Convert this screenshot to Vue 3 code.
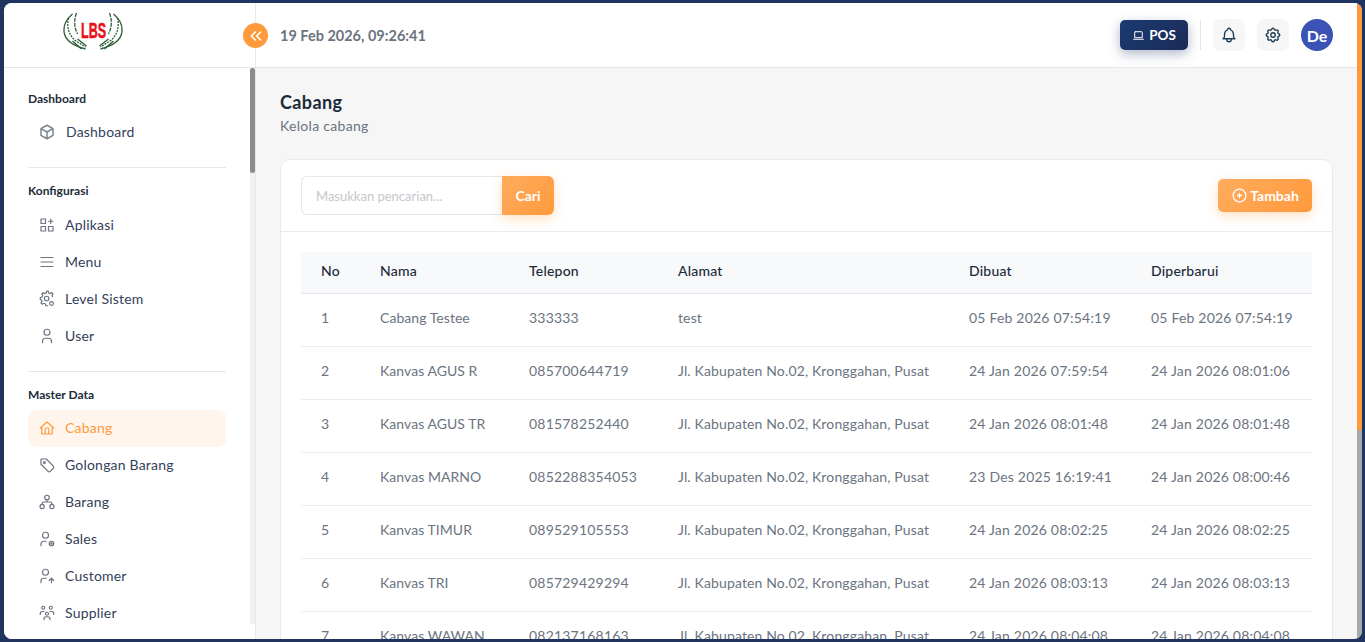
<script setup>
const konfigurasi = [
  { label: 'Aplikasi', icon: 'apps' },
  { label: 'Menu', icon: 'menu' },
  { label: 'Level Sistem', icon: 'cog' },
  { label: 'User', icon: 'user' },
]
const masterData = [
  { label: 'Cabang', icon: 'home', active: true },
  { label: 'Golongan Barang', icon: 'tag' },
  { label: 'Barang', icon: 'tree' },
  { label: 'Sales', icon: 'sales' },
  { label: 'Customer', icon: 'customer' },
  { label: 'Supplier', icon: 'group' },
]
const alamat = 'Jl. Kabupaten No.02, Kronggahan, Pusat'
const cabang = [
  { no: 1, nama: 'Cabang Testee', telp: '333333', alamat: 'test', dibuat: '05 Feb 2026 07:54:19', update: '05 Feb 2026 07:54:19' },
  { no: 2, nama: 'Kanvas AGUS R', telp: '085700644719', alamat, dibuat: '24 Jan 2026 07:59:54', update: '24 Jan 2026 08:01:06' },
  { no: 3, nama: 'Kanvas AGUS TR', telp: '081578252440', alamat, dibuat: '24 Jan 2026 08:01:48', update: '24 Jan 2026 08:01:48' },
  { no: 4, nama: 'Kanvas MARNO', telp: '0852288354053', alamat, dibuat: '23 Des 2025 16:19:41', update: '24 Jan 2026 08:00:46' },
  { no: 5, nama: 'Kanvas TIMUR', telp: '089529105553', alamat, dibuat: '24 Jan 2026 08:02:25', update: '24 Jan 2026 08:02:25' },
  { no: 6, nama: 'Kanvas TRI', telp: '085729429294', alamat, dibuat: '24 Jan 2026 08:03:13', update: '24 Jan 2026 08:03:13' },
  { no: 7, nama: 'Kanvas WAWAN', telp: '082137168163', alamat, dibuat: '24 Jan 2026 08:04:08', update: '24 Jan 2026 08:04:08' },
]
</script>

<template>
  <div class="frame">
    <div class="window">
      <aside class="sidebar">
        <div class="logo">
          <svg width="62" height="42" viewBox="0 0 61 42">
            <g class="hand">
              <path d="M10 4C4 9 0 16 2 24c2 8 10 12 21 15" />
              <path d="M14 3c-3 8-2 15 1 21" stroke-dasharray="4 1" />
              <path d="M6 8c-2 8 0 16 6 22l11 7" stroke-dasharray="2 1" />
              <path d="M10 31l9 8M15 29l9 7" stroke-width="1" />
            </g>
            <g class="hand" transform="matrix(-1 0 0 1 61 0)">
              <path d="M10 4C4 9 0 16 2 24c2 8 10 12 21 15" />
              <path d="M14 3c-3 8-2 15 1 21" stroke-dasharray="4 1" />
              <path d="M6 8c-2 8 0 16 6 22l11 7" stroke-dasharray="2 1" />
              <path d="M10 31l9 8M15 29l9 7" stroke-width="1" />
            </g>
            <text x="18.500" y="28" textLength="25" lengthAdjust="spacingAndGlyphs" class="logo-text">LBS</text>
          </svg>
        </div>
        <div class="nav-wrap">
          <nav class="nav">
            <div class="nav-group">
              <p class="nav-title">Dashboard</p>
              <a class="nav-item first">
                <svg class="ic" viewBox="0 0 24 24"><path d="M12 3l8 4.500v9L12 21l-8-4.500v-9L12 3zM12 12l8-4.500M12 12v9M12 12L4 7.500" /></svg>
                <span>Dashboard</span>
              </a>
            </div>
            <div class="nav-group">
              <p class="nav-title">Konfigurasi</p>
              <a v-for="item in konfigurasi" :key="item.label" class="nav-item">
                <svg class="ic" viewBox="0 0 24 24">
                  <path v-if="item.icon === 'apps'" d="M4 4h6v6H4zM4 14h6v6H4zM14 14h6v6h-6zM14 7h6M17 4v6" />
                  <path v-else-if="item.icon === 'menu'" d="M4 6h16M4 12h16M4 18h16" />
                  <template v-else-if="item.icon === 'cog'">
                    <path d="M13 21h-2.500l-.6-2.400-2-.9-2.200 1.300-1.700-1.700 1.300-2.200-.9-2L3 12.500V10l2.400-.6.9-2L5 5.200l1.700-1.700 2.200 1.300 2-.9.6-2.400h2l.6 2.400 2 .9 2.200-1.300 1.700 1.700-1.300 2.200.7 1.600" />
                    <circle cx="11.500" cy="11.300" r="3" />
                    <circle cx="18" cy="18" r="2.500" />
                  </template>
                  <path v-else d="M12 3a4 4 0 1 0 0 8 4 4 0 0 0 0-8zM6 21v-2a4 4 0 0 1 4-4h4a4 4 0 0 1 4 4v2" />
                </svg>
                <span>{{ item.label }}</span>
              </a>
            </div>
            <div class="nav-group last">
              <p class="nav-title">Master Data</p>
              <a v-for="item in masterData" :key="item.label" class="nav-item" :class="{ active: item.active }">
                <svg class="ic" viewBox="0 0 24 24">
                  <path v-if="item.icon === 'home'" d="M3 12l9-8 9 8M5 10v10h14V10M9.500 20v-6a2 2 0 0 1 2-2h1a2 2 0 0 1 2 2v6" />
                  <template v-else-if="item.icon === 'tag'">
                    <path d="M4 4h7l9.500 9.500a2 2 0 0 1 0 2.800l-4.200 4.200a2 2 0 0 1-2.800 0L4 11V4z" />
                    <circle cx="8.500" cy="8.500" r="1.200" />
                  </template>
                  <template v-else-if="item.icon === 'tree'">
                    <circle cx="12" cy="6" r="3" /><circle cx="5.500" cy="18" r="2.800" /><circle cx="18.500" cy="18" r="2.800" />
                    <path d="M12 9v3M5.500 15v-1a2 2 0 0 1 2-2h9a2 2 0 0 1 2 2v1" />
                  </template>
                  <template v-else-if="item.icon === 'sales'">
                    <circle cx="10" cy="7" r="4" /><path d="M4 21v-2a4 4 0 0 1 4-4h3" /><circle cx="18" cy="18" r="3" /><circle cx="18" cy="18" r=".8" />
                  </template>
                  <template v-else-if="item.icon === 'customer'">
                    <circle cx="10" cy="7" r="4" /><path d="M4 21v-2a4 4 0 0 1 4-4h3M18 21v-6M15 18l3-3 3 3" />
                  </template>
                  <template v-else>
                    <circle cx="7" cy="5" r="2" /><circle cx="17" cy="5" r="2" /><circle cx="12" cy="13" r="2" />
                    <path d="M3 14v-1a3 3 0 0 1 3-3h2M21 14v-1a3 3 0 0 0-3-3h-2M8 21v-1a3 3 0 0 1 3-3h2a3 3 0 0 1 3 3v1" />
                  </template>
                </svg>
                <span>{{ item.label }}</span>
              </a>
            </div>
          </nav>
          <div class="side-track"><div class="side-thumb"></div></div>
        </div>
      </aside>

      <div class="main">
        <header class="topbar">
          <button class="toggle">
            <svg width="16" height="16" viewBox="0 0 24 24"><path d="M11 6l-6 6 6 6M19 6l-6 6 6 6" /></svg>
          </button>
          <span class="clock">19 Feb 2026, 09:26:41</span>
          <div class="top-actions">
            <button class="pos">
              <svg width="13" height="13" viewBox="0 0 24 24"><path d="M6 5h12a1 1 0 0 1 1 1v10H5V6a1 1 0 0 1 1-1zM3 19h18" /></svg>
              POS
            </button>
            <span class="divider"></span>
            <button class="icon-btn">
              <svg width="18" height="18" viewBox="0 0 24 24"><path d="M10 5a2 2 0 1 1 4 0 7 7 0 0 1 4 6v3a4 4 0 0 0 2 3H4a4 4 0 0 0 2-3v-3a7 7 0 0 1 4-6M9 17v1a3 3 0 0 0 6 0v-1" /></svg>
            </button>
            <button class="icon-btn">
              <svg width="18" height="18" viewBox="0 0 24 24"><path d="M10.300 4.300c.4-1.800 3-1.800 3.400 0a1.700 1.700 0 0 0 2.600 1.100c1.500-.9 3.300.8 2.400 2.400a1.700 1.700 0 0 0 1 2.500c1.800.4 1.800 3 0 3.400a1.700 1.700 0 0 0-1 2.600c.9 1.500-.9 3.300-2.400 2.400a1.700 1.700 0 0 0-2.600 1c-.4 1.800-3 1.800-3.400 0a1.700 1.700 0 0 0-2.600-1c-1.500.9-3.300-.9-2.400-2.400a1.700 1.700 0 0 0-1-2.600c-1.800-.4-1.800-3 0-3.400a1.700 1.700 0 0 0 1-2.500c-.9-1.600.9-3.300 2.400-2.400a1.700 1.700 0 0 0 2.600-1.100z" /><circle cx="12" cy="12" r="3" /></svg>
            </button>
            <span class="avatar">De</span>
          </div>
        </header>

        <main class="content">
          <h1 class="page-title">Cabang</h1>
          <p class="page-sub">Kelola cabang</p>

          <section class="card">
            <div class="card-head">
              <div class="search">
                <input type="text" placeholder="Masukkan pencarian..." />
                <button class="btn-cari">Cari</button>
              </div>
              <button class="btn-tambah">
                <svg width="17" height="17" viewBox="0 0 24 24"><circle cx="12" cy="12" r="9" /><path d="M9 12h6M12 9v6" /></svg>
                Tambah
              </button>
            </div>
            <div class="card-body">
              <table>
                <thead>
                  <tr>
                    <th class="c-no">No</th>
                    <th class="c-nama">Nama</th>
                    <th class="c-telp">Telepon</th>
                    <th class="c-alamat">Alamat</th>
                    <th class="c-date">Dibuat</th>
                    <th>Diperbarui</th>
                  </tr>
                </thead>
                <tbody>
                  <tr v-for="row in cabang" :key="row.no">
                    <td>{{ row.no }}</td>
                    <td class="td-nama">{{ row.nama }}</td>
                    <td>{{ row.telp }}</td>
                    <td class="td-alamat">{{ row.alamat }}</td>
                    <td>{{ row.dibuat }}</td>
                    <td>{{ row.update }}</td>
                  </tr>
                </tbody>
              </table>
            </div>
          </section>
        </main>
      </div>

      <div class="page-track"><div class="page-thumb"></div></div>
    </div>
  </div>
</template>

<style>
html, body {
  margin: 0;
  height: 100%;
  overflow: hidden;
}
</style>

<style scoped>
.frame {
  height: 642px;
  padding: 3px 3px 3px 4px;
  box-sizing: border-box;
  background: #1f3560;
  font-family: Lato, "Open Sans", sans-serif;
}
.window {
  position: relative;
  display: flex;
  height: 636px;
  overflow: hidden;
  border-radius: 8px;
  background: #f6f6f6;
}
.page-track {
  width: 5px;
  flex-shrink: 0;
  background: #a3a8ab;
}
.page-thumb {
  height: 427px;
  background: #ff9a3c;
}
.sidebar {
  display: flex;
  flex-direction: column;
  width: 251px;
  flex-shrink: 0;
  background: #fff;
  border-right: 1px solid #e8e8e8;
}
.logo {
  display: flex;
  height: 65px;
  padding: 7px 0 0 58px;
  box-sizing: border-box;
  border-bottom: 1px solid #e8e8e8;
}
.logo-text {
  font-family: "Liberation Sans", sans-serif;
  font-size: 22px;
  font-weight: 700;
  fill: #e8101a;
  stroke: #e8101a;
  stroke-width: .5px;
}
.nav-wrap {
  display: flex;
  flex: 1;
  min-height: 0;
}
.nav {
  flex: 1;
  min-width: 0;
  overflow: hidden;
  padding: 0 24px;
}
.side-track {
  width: 5px;
  flex-shrink: 0;
  margin-bottom: 15px;
  background: #f0f0f0;
}
.side-thumb {
  height: 105px;
  border-radius: 3px;
  background: #8b8b8b;
}
.nav-group {
  padding: 16px 0;
  border-bottom: 1px solid #e8e8e8;
}
.nav-group:first-child {
  padding-top: 24px;
}
.nav-group.last {
  border-bottom: 0;
}
.nav-title {
  margin: -1px 0 9px;
  font-size: 12px;
  font-weight: 700;
  line-height: 15px;
  color: #1c2b3a;
}
.nav-group.last .nav-title {
  margin-bottom: 8px;
}
.nav-item {
  display: flex;
  align-items: center;
  gap: 9px;
  height: 37px;
  padding: 0 0 2px 10px;
  box-sizing: border-box;
  font-size: 14px;
  letter-spacing: .2px;
  color: #33415a;
  border-radius: 8px;
}
.nav-item.first {
  gap: 10px;
  margin-top: -1px;
}
.nav-item.first .ic path {
  stroke: #7a8590;
  stroke-width: 2;
}
.nav-item.active {
  background: #fff5ed;
  color: #ff9a3c;
}
.ic {
  width: 18px;
  height: 18px;
  flex-shrink: 0;
}
svg path, svg circle {
  fill: none;
  stroke: currentColor;
  stroke-width: 1.800;
  stroke-linecap: round;
  stroke-linejoin: round;
}
.hand path {
  stroke: #2c5e34;
  stroke-width: 1.300;
  stroke-linecap: butt;
}
.ic path, .ic circle {
  stroke: #6b7480;
  stroke-width: 1.600;
}
.nav-item.active .ic path {
  stroke: #ff9a3c;
}
.main {
  flex: 1;
  min-width: 0;
  display: flex;
  flex-direction: column;
}
.topbar {
  display: flex;
  align-items: center;
  flex-shrink: 0;
  height: 65px;
  padding: 0 24px;
  box-sizing: border-box;
  background: #fff;
  border-bottom: 1px solid #e8e8e8;
}
.toggle {
  position: absolute;
  left: 239px;
  top: 20px;
  display: flex;
  align-items: center;
  justify-content: center;
  width: 25px;
  height: 25px;
  padding: 0;
  border: 0;
  border-radius: 50%;
  background: #ff9a3c;
  color: #fff;
}
.toggle path {
  stroke-width: 2.400;
}
.clock {
  font-size: 14.500px;
  font-weight: 700;
  color: #6b7480;
}
.top-actions {
  display: flex;
  align-items: center;
  margin-left: auto;
}
.pos {
  display: flex;
  align-items: center;
  gap: 4px;
  width: 68px;
  height: 30px;
  justify-content: center;
  padding: 0;
  border: 0;
  border-radius: 5px;
  background: linear-gradient(135deg, #1c3a72, #1a2c57);
  color: #fff;
  font-family: inherit;
  font-size: 13.500px;
  font-weight: 700;
  box-shadow: 0 4px 12px rgba(28, 52, 105, .35);
}
.divider {
  width: 1px;
  height: 30px;
  margin: 0 12px;
  background: #e2e6ea;
}
.icon-btn {
  display: flex;
  align-items: center;
  justify-content: center;
  width: 32px;
  height: 32px;
  padding: 0;
  margin-right: 12px;
  border: 0;
  border-radius: 8px;
  background: #f6f6f6;
  color: #1c3a52;
}
.avatar {
  display: flex;
  align-items: center;
  justify-content: center;
  width: 32px;
  height: 32px;
  border-radius: 50%;
  background: #3a53b5;
  color: #fff;
  font-size: 16px;
  font-weight: 700;
}
.content {
  flex: 1;
  overflow: hidden;
  padding: 23px 24px 0;
}
.page-title {
  margin: 0;
  font-size: 18px;
  font-weight: 700;
  line-height: 22px;
  letter-spacing: .4px;
  color: #1c2b3a;
}
.page-sub {
  margin: 3px 0 0;
  font-size: 14px;
  line-height: 20px;
  letter-spacing: .3px;
  color: #6b7480;
}
.card {
  margin-top: 23px;
  background: #fff;
  border: 1px solid #e8eaec;
  border-radius: 10px;
}
.card-head {
  display: flex;
  align-items: center;
  justify-content: space-between;
  height: 71px;
  padding: 0 20px;
  border-bottom: 1px solid #e8eaec;
}
.search {
  display: flex;
  width: 253px;
  height: 39px;
}
.search input {
  flex: 1;
  min-width: 0;
  padding: 0 14px;
  box-sizing: border-box;
  border: 1px solid #e4e8ec;
  border-right: 0;
  border-radius: 6px 0 0 6px;
  font-family: inherit;
  font-size: 13px;
  outline: 0;
}
.search input::placeholder {
  color: #c4c8cc;
}
.btn-cari {
  width: 52px;
  border: 0;
  border-radius: 0 6px 6px 0;
  background: linear-gradient(135deg, #ffac5e, #ff9a3c);
  color: #fff;
  font-family: inherit;
  font-size: 14px;
  font-weight: 700;
  box-shadow: 0 4px 12px rgba(255, 154, 60, .3);
}
.btn-tambah {
  display: flex;
  align-items: center;
  justify-content: center;
  gap: 2px;
  width: 94px;
  height: 33px;
  padding: 0;
  border: 0;
  border-radius: 5px;
  background: linear-gradient(135deg, #ffac5e, #ff9a3c);
  color: #fff;
  font-family: inherit;
  font-size: 14px;
  font-weight: 700;
  box-shadow: 0 4px 12px rgba(255, 154, 60, .3);
}
.card-body {
  padding: 20px;
}
table {
  width: 100%;
  border-collapse: collapse;
  table-layout: fixed;
  font-size: 14px;
  letter-spacing: .2px;
}
th {
  height: 41px;
  padding: 0 20px 3px;
  box-sizing: border-box;
  background: #f8f9fb;
  border-bottom: 1px solid #e4e8ec;
  text-align: left;
  font-weight: 500;
  color: #1c2b3a;
}
td {
  height: 53px;
  padding: 0 20px 5px;
  box-sizing: border-box;
  border-bottom: 1px solid #ececec;
  color: #6b7480;
  white-space: nowrap;
}
.td-nama {
  letter-spacing: .05px;
}
.td-alamat {
  letter-spacing: .14px;
}
.c-no { width: 59px; }
.c-nama { width: 149px; }
.c-telp { width: 149px; }
.c-alamat { width: 291px; }
.c-date { width: 182px; }
</style>
